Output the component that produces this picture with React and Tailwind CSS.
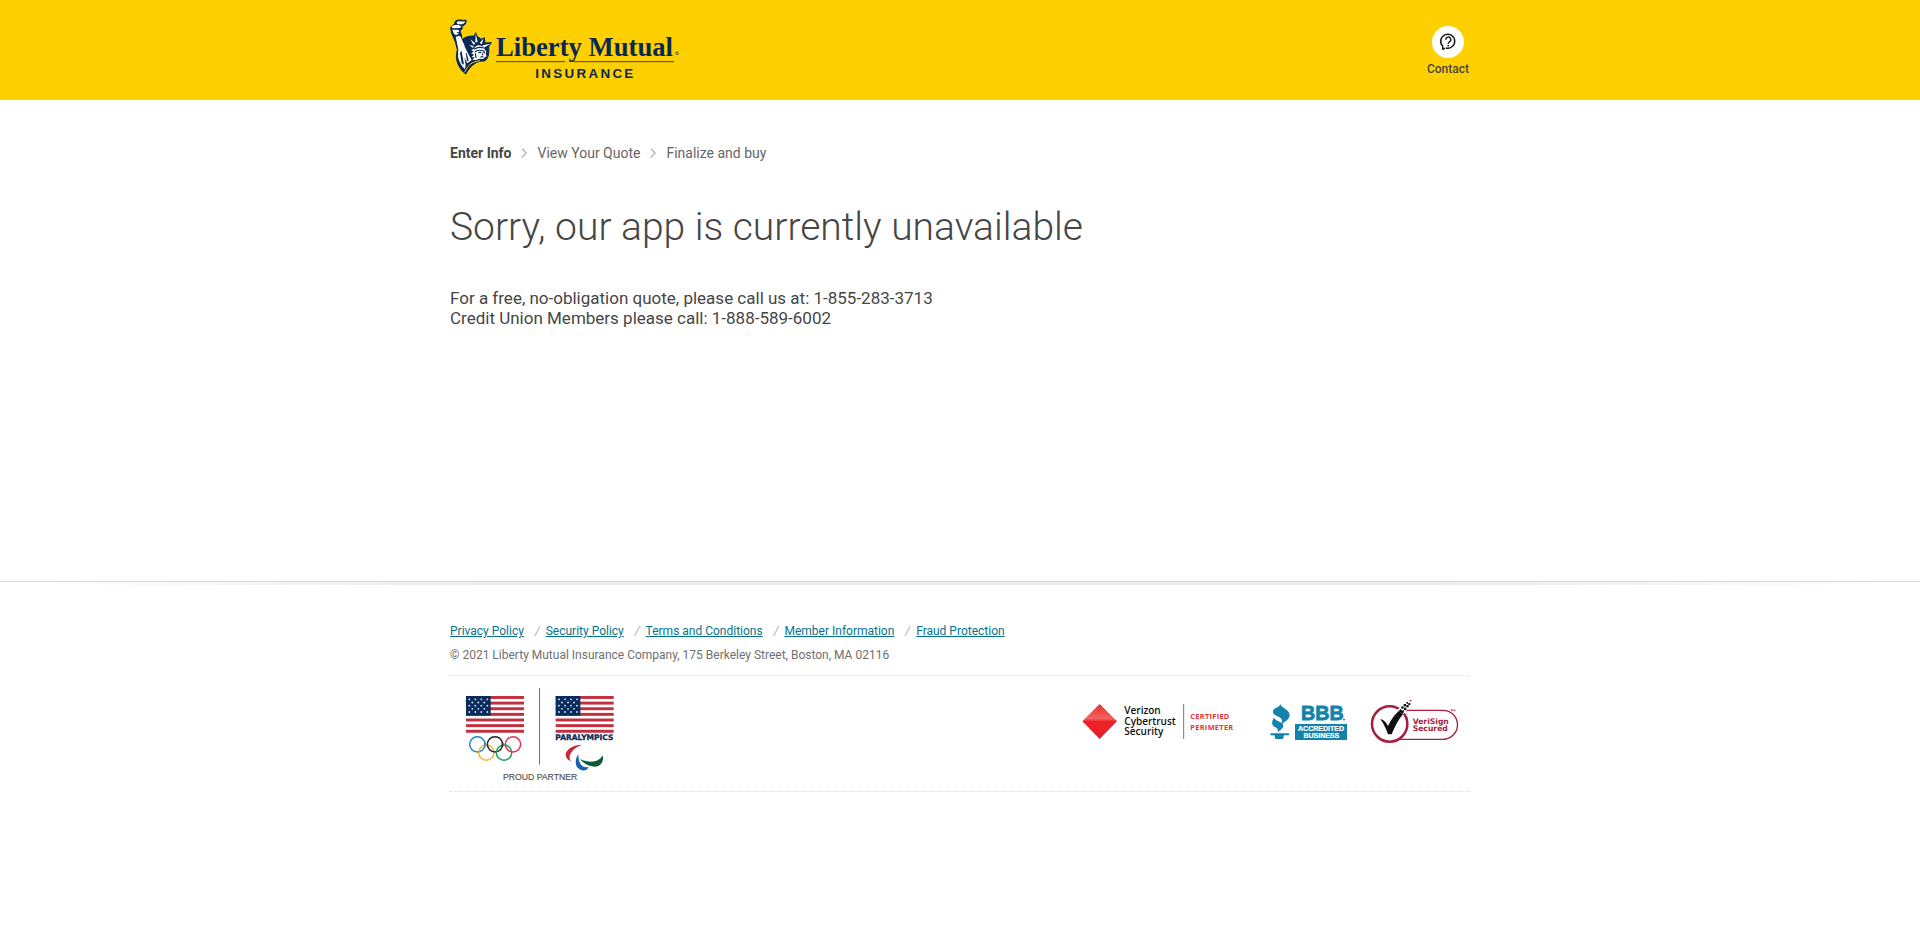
const NAVY = '#0a2756';

function LibertyLogo() {
  return (
    <svg className="h-20 w-60" viewBox="30 0 720 240" role="img" aria-label="Liberty Mutual Insurance">
      <g transform="translate(15 6)">
        <path
          fill={NAVY}
          stroke={NAVY}
          strokeWidth="3"
          d="M50 84 C58 75 74 71 88 72 L92 62 L96 73 C100 75 104 78 108 82 L118 77 L120 93 L139 92 L131 104 C133 124 130 142 118 147 C96 146 78 158 62 186 C44 172 34 152 34 132 L37 112 L31 90 L19 62 L17 46 L28 36 L32 26 C44 20 56 28 63 24 C65 34 58 42 50 43 L52 50 L45 56 L50 72 Z"
        />
        <path fill="#fff" d="M35 30 C42 24 52 31 61 28 C58 36 50 39 45 36 C41 39 35 37 35 30 Z" />
        <path fill="#fff" d="M20 43 C28 38 42 38 48 43 L46 48 L22 49 Z" />
        <path fill="#fff" d="M22 53 L40 53 L43 60 L34 61 L42 65 L34 69 L27 66 Z" />
        <path fill="#fff" d="M32 74 L45 71 C51 84 57 94 60 106 L68 122 L80 144 L67 154 L58 137 L62 158 L60 172 C50 162 42 150 39 134 L40 112 Z" />
        <path fill={NAVY} d="M45 122 L50 117 L57 158 L50 154 Z M62 122 L65 124 L71 146 L66 148 Z" />
        <path fill="#fff" d="M92 65 L98 90 L91 91 Z M76 82 L91 94 L86 99 Z M116 79 L110 97 L104 93 Z M137 95 L116 107 L112 100 Z M72 99 L86 102 L84 108 Z" />
        <path fill="#fff" d="M86 111 C91 98 106 96 115 106 L124 119 L122 126 L125 133 L117 137 L115 141 L103 140 L93 144 L82 144 L89 137 L80 135 L87 128 L78 124 L86 119 L79 114 Z" />
        <path
          fill="none"
          stroke={NAVY}
          strokeWidth="3.5"
          d="M87 112 C96 105 106 105 116 108 M90 120 C97 112 108 114 119 118 M91 124 L93 138 M100 122 L109 121 M115 122 L120 122 M112 124 L114 130 M106 135 L115 134"
        />
        <path fill="none" stroke="#ffd000" strokeWidth="3" d="M59 181 C68 160 80 149 105 146" />
      </g>
      <text x="168" y="137" fontSize="80" fontWeight="700" fill={NAVY} className="font-['Liberation_Serif',serif]">
        Liberty Mutual
      </text>
      <circle cx="711" cy="130" r="4" fill="none" stroke={NAVY} strokeWidth="2" />
      <path stroke={NAVY} strokeWidth="2.5" d="M168 155 H375 M401 155 H702" />
      <text x="286" y="203" fontSize="40" fontWeight="700" fill={NAVY} letterSpacing="7" className="font-['Liberation_Sans',sans-serif]">
        INSURANCE
      </text>
    </svg>
  );
}

function ContactIcon() {
  return (
    <svg className="size-8" viewBox="0 0 32 32" fill="none" aria-hidden="true">
      <circle cx="16" cy="16" r="16" fill="#fff" />
      <path d="M14 22 A7 7 0 1 0 10.600 20 L10.800 23.300 L13 22.200" stroke="#1a1a1a" strokeWidth="1.5" strokeLinejoin="round" />
      <path d="M13.800 13.800 A2.500 2.500 0 1 1 17.400 15.800 C16.500 16.400 16.200 16.700 16.200 17.700" stroke="#1a1a1a" strokeWidth="1.4" />
      <circle cx="16.200" cy="19.600" r="0.900" fill="#1a1a1a" />
    </svg>
  );
}

function Chevron() {
  return (
    <svg className="h-3 w-2" viewBox="0 0 8 12" fill="none" stroke="#bbb" strokeWidth="1.500" aria-hidden="true">
      <path d="M2 1.500 L6 6 L2 10.500" />
    </svg>
  );
}

const stripes = [0, 1, 2, 3, 4, 5, 6];
const starRows = [
  [9, 27, 45, 63],
  [18, 36, 54],
  [9, 27, 45, 63],
  [18, 36, 54],
  [9, 27, 45, 63],
];

function Flag({ x }) {
  return (
    <g transform={`translate(${x} 51)`}>
      <rect width="174" height="110" fill="#fff" />
      {stripes.map((i) => (
        <rect key={i} y={i * 16.9} width="174" height="8.8" fill="#c22f3e" />
      ))}
      <rect width="74" height="59" fill="#082c5c" />
      {starRows.map((row, r) =>
        row.map((cx) => <circle key={`${r}-${cx}`} cx={cx + 1} cy={10 + r * 9.5} r="2.7" fill="#dfe6ef" />)
      )}
    </g>
  );
}

function PartnerLogo() {
  return (
    <svg className="h-[100px] w-[180px]" viewBox="0 18 540 300" role="img" aria-label="Team USA proud partner">
      <Flag x={48} />
      <Flag x={317} />
      <path stroke="#555" strokeWidth="2.5" d="M268.500 27 V257" />
      <g fill="none" strokeWidth="4.5">
        <circle cx="82" cy="196" r="23" stroke="#1b86c8" />
        <circle cx="109" cy="221" r="23" stroke="#f6b240" />
        <circle cx="135" cy="196" r="23" stroke="#222" />
        <circle cx="162" cy="221" r="23" stroke="#17a05a" />
        <circle cx="189" cy="196" r="23" stroke="#e5304f" />
        <path stroke="#1b86c8" d="M104.200 189 A23 23 0 0 1 104 203" />
        <path stroke="#222" d="M157 189 A23 23 0 0 1 157 203" />
      </g>
      <text x="316" y="184" fontSize="22.500" fontWeight="700" fill="#0d2b58" stroke="#0d2b58" strokeWidth="1" className="font-['DejaVu_Sans',sans-serif]">
        PARALYMPICS
      </text>
      <path fill="#c8283c" d="M396 197 C372 197 345 211 347 229 C348 238 354 244 363 247 C350 228 370 207 396 197 Z" />
      <path fill="#1562ac" d="M385 226 C375 240 373 263 389 271 C399 278 411 275 416 264 C396 269 385 253 385 226 Z" />
      <path fill="#0b5a33" d="M390 240 C402 256 426 266 443 262 C456 257 462 241 458 229 C448 249 420 254 390 240 Z" />
      <text x="159" y="303" fontSize="26" fill="#555" stroke="#555" strokeWidth="0.500" className="font-['Liberation_Sans',sans-serif]">
        PROUD PARTNER
      </text>
    </svg>
  );
}

function VerizonLogo() {
  return (
    <svg className="h-[37px] w-[154px]" viewBox="36 42 462 111" role="img" aria-label="Verizon Cybertrust Security Certified Perimeter">
      <defs>
        <linearGradient id="diamond" x1="0" y1="0" x2="0" y2="1">
          <stop offset="0" stopColor="#e8332f" />
          <stop offset="0.420" stopColor="#f2625c" />
          <stop offset="0.500" stopColor="#ee2228" />
          <stop offset="1" stopColor="#e81c24" />
        </linearGradient>
      </defs>
      <path fill="url(#diamond)" d="M89 45 L141 97 L89 150 L37 97 Z" />
      <g fontSize="30" fontWeight="600" fill="#111" className="font-['Open_Sans',sans-serif]">
        <text x="163" y="75">Verizon</text>
        <text x="163" y="107">Cybertrust</text>
        <text x="163" y="138">Security</text>
      </g>
      <path stroke="#777" strokeWidth="3" d="M341 45 V150" />
      <g fontSize="22" fontWeight="700" fill="#e5333a" letterSpacing="1" className="font-['Open_Sans',sans-serif]">
        <text x="361" y="91">CERTIFIED</text>
        <text x="361" y="122">PERIMETER</text>
      </g>
    </svg>
  );
}

function BbbLogo() {
  return (
    <svg className="h-[38px] w-[79px]" viewBox="42 42 237 114" role="img" aria-label="BBB Accredited Business">
      <g fill="#1483ab">
        <path d="M76 45 C79 57 104 62 104 78 C104 89 93 97 78 106 C84 94 80 88 72 84 C58 78 53 74 54 66 C56 56 73 56 76 45 Z" />
        <path d="M57 86 C60 96 84 98 85 109 C86 116 78 123 68 130 C70 122 67 118 61 115 C48 108 50 96 57 86 Z" />
        <path d="M46 133 H102 V139 H87 L84 150 H61 L58 139 H46 Z" />
        <rect x="120" y="105" width="156" height="48" />
        <text x="138" y="94" fontSize="59" fontWeight="700" stroke="#1483ab" strokeWidth="2.500" className="font-['Liberation_Sans',sans-serif]">
          BBB
        </text>
        <rect x="264" y="90" width="6" height="4" />
      </g>
      <g fill="#fff" stroke="#fff" strokeWidth="0.600" fontSize="21" fontWeight="700" textAnchor="middle" className="font-['Liberation_Sans',sans-serif]">
        <text x="198" y="127">ACCREDITED</text>
        <text x="199" y="147">BUSINESS</text>
      </g>
    </svg>
  );
}

function VeriSignLogo() {
  return (
    <svg className="h-[45px] w-[89px]" viewBox="345 30 267 135" role="img" aria-label="VeriSign Secured">
      <path fill="#fff" stroke="#a5203c" strokeWidth="4" d="M440 64 H564 A43 43 0 0 1 564 151 H430" />
      <circle cx="404" cy="105" r="53" fill="#fff" stroke="#a5203c" strokeWidth="7.500" />
      <path fill="#fff" d="M424 66 L452 38 L466 48 L446 76 Z" />
      <path fill="#111" d="M376 91 C384 90 391 97 399 111 C407 94 418 78 431 66 L444 75 C430 92 420 112 410 136 L399 136 C393 120 386 103 376 91 Z" />
      <g fill="#111">
        <path d="M431 66 L437 60 L442 65 L448 62 L444 75 Z" />
        <rect x="439" y="52" width="7" height="7" />
        <rect x="447" y="56" width="7" height="7" />
        <rect x="446" y="45" width="7" height="7" />
        <rect x="454" y="48" width="7" height="7" />
        <rect x="454" y="39" width="5" height="5" />
        <rect x="460" y="42" width="6" height="6" />
        <rect x="433" y="76" width="6" height="6" />
      </g>
      <rect x="464" y="33" width="5" height="4" fill="#a5203c" />
      <g fontSize="23" fontWeight="700" fill="#a5203c" className="font-['DejaVu_Sans',sans-serif]">
        <text x="473" y="105">VeriSign</text>
        <text x="473" y="125">Secured</text>
      </g>
      <path stroke="#a5203c" strokeWidth="2" fill="none" d="M587 62 H592 M589.500 62 V67 M594 67 V62 L597 65 L600 62 V67" />
    </svg>
  );
}

const steps = ['Enter Info', 'View Your Quote', 'Finalize and buy'];

const links = ['Privacy Policy', 'Security Policy', 'Terms and Conditions', 'Member Information', 'Fraud Protection'];

export default function App() {
  return (
    <div className="bg-white font-['Roboto',sans-serif] text-[#464646]">
      <header className="bg-[#ffd000]">
        <div className="mx-auto flex max-w-[1020px] items-start justify-between py-[10px] pr-px">
          <a href="#home">
            <LibertyLogo />
          </a>
          <button type="button" className="mt-4 flex flex-col items-center gap-[3px] text-xs font-medium">
            <ContactIcon />
            Contact
          </button>
        </div>
      </header>

      <main className="mx-auto max-w-[1020px] pb-[253px] pt-[43px]">
        <nav aria-label="Progress">
          <ol className="flex items-center gap-[9px] text-sm">
            {steps.map((step, i) => (
              <li key={step} className="flex items-center gap-[9px]">
                {i > 0 && <Chevron />}
                <span className={i === 0 ? 'font-bold' : 'text-[#666]'}>{step}</span>
              </li>
            ))}
          </ol>
        </nav>
        <h1 className="mt-10 text-[39px] font-light leading-[48px]">Sorry, our app is currently unavailable</h1>
        <p className="mt-[37px] text-[17px] leading-5">
          For a free, no-obligation quote, please call us at: 1-855-283-3713
          <br />
          Credit Union Members please call: 1-888-589-6002
        </p>
      </main>

      <footer className="border-t border-[#d8d8d8]">
        <div className="h-[3px] bg-linear-to-r from-white via-[#ececec] from-2% via-25% to-25% to-[#ececec]">
          <div className="ml-auto h-full w-1/4 bg-linear-to-r from-[#ececec] to-white to-95%" />
        </div>
        <div className="mx-auto max-w-[1020px] pt-[38px] text-xs">
          <ul className="flex">
            {links.map((link, i) => (
              <li key={link} className="flex">
                {i > 0 && <span className="pl-[11px] pr-[6px] italic text-[#aaa]">/</span>}
                <a href="#legal" className="text-[#06748c] underline">
                  {link}
                </a>
              </li>
            ))}
          </ul>
          <p className="mt-2 text-[#707070]">© 2021 Liberty Mutual Insurance Company, 175 Berkeley Street, Boston, MA 02116</p>
          <div className="mt-3 flex items-start justify-between border-y border-dotted border-[#ddd] pb-[6px] pr-[11px] pt-[9px]">
            <PartnerLogo />
            <div className="flex items-center pt-[14px]">
              <VerizonLogo />
              <div className="ml-[33px] flex items-center gap-[22px]">
                <BbbLogo />
                <VeriSignLogo />
              </div>
            </div>
          </div>
        </div>
      </footer>
    </div>
  );
}
